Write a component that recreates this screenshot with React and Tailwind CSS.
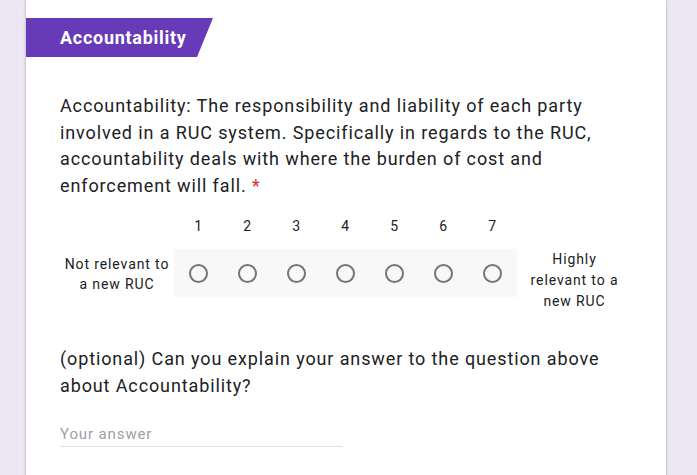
import React from 'react';

const font = "Roboto, 'Liberation Sans', Arial, sans-serif";

function Radio() {
  return (
    <div className="w-[49px] h-12 flex items-center justify-center">
      <div className="w-[19px] h-[19px] rounded-full border-2 border-[#757575]" />
    </div>
  );
}

export default function App() {
  const scale = [1, 2, 3, 4, 5, 6, 7];

  return (
    <div style={{ fontFamily: font }} className="h-[475px] overflow-hidden bg-[#ece6f5] text-[#202124] tracking-[0.055em]">
      <div className="ml-[26px] w-[640px] min-h-[500px] bg-white shadow-[0_0_3px_rgba(0,0,0,0.28)] pt-[18px] pl-[34px] pr-[30px]">
        {/* section tab */}
        <div className="-ml-[34px] w-[187px] h-[39px] bg-[#673ab7] [clip-path:polygon(0_0,100%_0,calc(100%-16px)_100%,0_100%)] flex items-center pl-[34px]">
          <span className="text-white font-bold text-[18px] tracking-[0.04em]">Accountability</span>
        </div>

        {/* question */}
        <p className="mt-[36px] text-[18px] leading-[26.5px] whitespace-nowrap">
          Accountability: The responsibility and liability of each party<br />
          involved in a RUC system. Specifically in regards to the RUC,<br />
          accountability deals with where the burden of cost and<br />
          enforcement will fall. <span className="text-[#d93025]">*</span>
        </p>

        {/* linear scale */}
        <div className="mt-[17px] flex text-[14px]">
          <div className="w-[114px]" />
          {scale.map((n) => (
            <div key={n} className="w-[49px] text-center leading-5">{n}</div>
          ))}
        </div>
        <div className="mt-[13px] flex items-start text-[14px]">
          <div className="w-[114px] pt-[5px] text-center leading-5 whitespace-nowrap">Not relevant to<br />a new RUC</div>
          <div className="flex bg-[#f8f8f8]">
            {scale.map((n) => (
              <Radio key={n} />
            ))}
          </div>
          <div className="w-[115px] text-center leading-[21px] whitespace-nowrap">Highly<br />relevant to a<br />new RUC</div>
        </div>

        {/* follow-up */}
        <p className="mt-[33px] text-[18px] leading-[27px] whitespace-nowrap">
          (optional) Can you explain your answer to the question above<br />about Accountability?
        </p>
        <div className="mt-[25px] w-[282px] border-b border-[#e0e0e0] pb-[2px] text-[15px] leading-5 text-[#a0a0a8]">
          Your answer
        </div>
      </div>
    </div>
  );
}
